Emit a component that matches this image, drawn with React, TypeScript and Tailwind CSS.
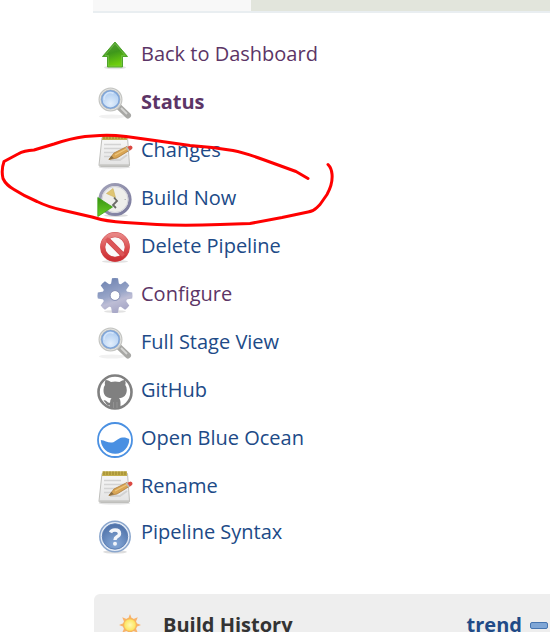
import type { ReactNode } from "react";

function Icon({ children }: { children: ReactNode }) {
  return (
    <svg viewBox="0 0 36 36" className="size-9 shrink-0" aria-hidden="true">
      {children}
    </svg>
  );
}

function ArrowIcon() {
  return (
    <Icon>
      <defs>
        <linearGradient id="arrow" x1="0" y1="0" x2="0.3" y2="1">
          <stop offset="0" stopColor="#5b9e3c" />
          <stop offset="0.5" stopColor="#3f981b" />
          <stop offset="1" stopColor="#6fd00c" />
        </linearGradient>
      </defs>
      <ellipse cx="18" cy="29.500" rx="11" ry="1.800" fill="#e2e2e2" />
      <path d="M18 4 30.500 18.500H25.500V29H10.500V18.500H5.500Z" fill="url(#arrow)" stroke="#4fa42c" strokeLinejoin="round" />
      <path d="M18 5.500 28 17.500H24.500V28H11.500V17.500H8Z" fill="none" stroke="#7cc552" strokeWidth="0.6" />
    </Icon>
  );
}

function SearchIcon() {
  return (
    <Icon>
      <defs>
        <radialGradient id="lens" cx="0.5" cy="0.7" r="0.7">
          <stop offset="0" stopColor="#e3effc" />
          <stop offset="1" stopColor="#a3c5ee" />
        </radialGradient>
      </defs>
      <ellipse cx="15" cy="30.500" rx="13" ry="2" fill="#f1f1f1" />
      <path d="M21 20 31 29.500" stroke="#a8a8a5" strokeWidth="6" strokeLinecap="round" />
      <path d="M24 22 30 28" stroke="#d6d6d4" strokeWidth="1.800" />
      <circle cx="13.500" cy="13.500" r="10.500" fill="url(#lens)" stroke="#c4c5c2" strokeWidth="3" />
      <circle cx="13.500" cy="13.500" r="10.500" fill="none" stroke="#e5e5e2" />
      <circle cx="13.500" cy="13.500" r="8.700" fill="none" stroke="#7fa5d8" strokeWidth="1.500" />
      <path d="M7.500 14a6 6 0 0 1 9-6.500" fill="none" stroke="#d4e5fa" strokeWidth="1.500" />
    </Icon>
  );
}

function NotepadIcon() {
  return (
    <Icon>
      <defs>
        <linearGradient id="sheet" x1="0" y1="0" x2="0" y2="1">
          <stop offset="0" stopColor="#f8f8f8" />
          <stop offset="1" stopColor="#e3e3e3" />
        </linearGradient>
      </defs>
      <ellipse cx="17.500" cy="33.300" rx="16" ry="1.300" fill="#e2e2e2" />
      <path d="M5 3.500H30.500L32.500 31Q32.500 32.500 31 32.500H3.500Q2 32.500 2 31Z" fill="url(#sheet)" stroke="#bfbfbc" />
      <path d="M2.500 30.300H32V32H2.500Z" fill="#c6c6c3" />
      <path d="M5.500 1.200H30V6H5Z" fill="#c2ae4d" />
      <path d="M7 1.500V5M10 1.500V5M13 1.500V5M16 1.500V5M19 1.500V5M22 1.500V5M25 1.500V5M28 1.500V5" stroke="#a38d31" strokeWidth="1.300" />
      <path d="M7 10.500H24M7 14.500H27M7 18.500H20M7 22.500H14" stroke="#d3d3d3" strokeWidth="1.300" />
      <path d="M13 26H23L30 21" fill="none" stroke="#d2d2d2" strokeWidth="2" />
      <path d="m12 25.500 5-6.500L30 12.500l3 3.500-13 8Z" fill="#d9a554" stroke="#ad7d3d" strokeWidth="0.8" />
      <path d="m18 21 13-7" stroke="#edc67d" strokeWidth="1.300" />
      <path d="m11.500 25.800 3-4 2.500 2.500Z" fill="#8c7045" />
      <path d="m28.500 13.500 3 4 1.500-.8-3-4Z" fill="#bbb" />
      <path d="m30.500 12.800 3-1.300q3 1 1.500 3.500l-2 1.500Z" fill="#db4a43" />
    </Icon>
  );
}

function ClockIcon() {
  return (
    <Icon>
      <defs>
        <linearGradient id="rim" x1="0" y1="0" x2="1" y2="1">
          <stop offset="0" stopColor="#a2a2b9" />
          <stop offset="1" stopColor="#7a7a9d" />
        </linearGradient>
        <linearGradient id="play" x1="0" y1="0" x2="0" y2="1">
          <stop offset="0" stopColor="#389311" />
          <stop offset="1" stopColor="#69d025" />
        </linearGradient>
      </defs>
      <ellipse cx="19" cy="33.500" rx="12" ry="1.500" fill="#ddd" />
      <circle cx="18" cy="17.500" r="15" fill="#eeeeeb" stroke="url(#rim)" strokeWidth="3.200" />
      <circle cx="18" cy="17.500" r="13" fill="none" stroke="#d2d2da" />
      <path d="M9.500 11.500 16 6.500l2.500 9Z" fill="#dfc573" stroke="#cbb25e" strokeWidth="0.6" />
      <path d="m17 15.500 3 3.500-4 4 3 3" fill="none" stroke="#6a6a66" strokeWidth="1.800" />
      <path d="M29 17.500h-1.500" stroke="#bbb" />
      <path d="M.8 15.500 15.500 25 .8 34.500Z" fill="url(#play)" stroke="#3c9f17" strokeWidth="0.8" />
    </Icon>
  );
}

function DeleteIcon() {
  return (
    <Icon>
      <defs>
        <linearGradient id="ban" x1="0" y1="0" x2="0" y2="1">
          <stop offset="0" stopColor="#e88584" />
          <stop offset="0.6" stopColor="#d9494b" />
          <stop offset="1" stopColor="#cc3035" />
        </linearGradient>
      </defs>
      <ellipse cx="18" cy="31.500" rx="13" ry="1.500" fill="#e2e2e2" />
      <circle cx="18" cy="17" r="12.300" fill="#fafafa" stroke="#d05053" strokeWidth="5.200" />
      <path d="m9.500 8.500 17 17" stroke="#cf4a4d" strokeWidth="5.200" />
      <circle cx="18" cy="17" r="12.300" fill="none" stroke="url(#ban)" strokeWidth="4.200" />
      <path d="m9.500 8.500 17 17" stroke="#dc5658" strokeWidth="3.800" />
    </Icon>
  );
}

const turns = [0, 45, 90, 135, 180, 225, 270, 315];

function GearIcon() {
  return (
    <Icon>
      <defs>
        <linearGradient id="gear" gradientUnits="userSpaceOnUse" x1="12" y1="1" x2="24" y2="35">
          <stop offset="0" stopColor="#7286b3" />
          <stop offset="0.45" stopColor="#98a5c8" />
          <stop offset="0.65" stopColor="#bdbdd5" />
          <stop offset="1" stopColor="#a3a3c4" />
        </linearGradient>
        <mask id="gearShape">
          <circle cx="18" cy="17.500" r="12.500" fill="white" />
          {turns.map((angle) => (
            <path key={angle} d="M13.800 7.500 15 .3q3-.6 6 0L22.200 7.500Z" fill="white" transform={`rotate(${angle} 18 17.500)`} />
          ))}
          <circle cx="18" cy="17.500" r="4.500" fill="black" />
        </mask>
      </defs>
      <ellipse cx="18" cy="33.500" rx="11" ry="1.300" fill="#e2e2e2" />
      <rect width="36" height="36" fill="url(#gear)" mask="url(#gearShape)" />
      <circle cx="18" cy="17.500" r="5" fill="none" stroke="#8c94b8" />
    </Icon>
  );
}

function OctocatIcon() {
  return (
    <Icon>
      <circle cx="18" cy="18" r="16.500" fill="white" stroke="#808080" strokeWidth="2.600" />
      <path
        d="M8.500 6Q11 5.800 14 8Q18 7 22.500 8Q25.500 5.800 28 6Q29 8.500 28.300 11Q30 13 29.800 16C29.500 21.500 27 23.500 22 24.300Q23.500 25.500 23.500 28V34Q18 36 13 34V31.500C9 31.800 9.500 28.800 6.800 27Q6 26 8 26.200C10.500 27 10.500 29.500 13 28.700Q13 25.500 14.500 24.300C9 23.500 6.500 21.500 6.500 16Q6.300 13 8 11Q7.500 8.500 8.500 6Z"
        fill="#808080"
      />
      <path d="M16.500 28V34M20 28V34" stroke="#929292" />
    </Icon>
  );
}

function OceanIcon() {
  return (
    <Icon>
      <circle cx="18" cy="18" r="17" fill="white" stroke="#4a90e2" strokeWidth="1.800" />
      <path d="M3.800 18C8 18.500 11 21 15 20.500C19 20 20.500 16 25.500 15.500C28 15.200 30 16 32.200 17A14.200 14.200 0 0 1 3.800 18Z" fill="#4a90e2" />
    </Icon>
  );
}

function HelpIcon() {
  return (
    <Icon>
      <defs>
        <radialGradient id="help" cx="0.5" cy="0.8" r="0.8">
          <stop offset="0" stopColor="#86a9d8" />
          <stop offset="1" stopColor="#4d70a7" />
        </radialGradient>
      </defs>
      <ellipse cx="18" cy="34" rx="12" ry="1.600" fill="#ddd" />
      <circle cx="18" cy="18.500" r="15.200" fill="#e6edf7" stroke="#8aa6cd" strokeWidth="1.500" />
      <circle cx="18" cy="18.500" r="12.700" fill="url(#help)" stroke="#5f82b7" />
      <path d="M13.500 14.500Q14.500 12 18 12Q22.500 12 22.500 15.500Q22.500 17.500 20 18.700Q18 19.800 18 22" fill="none" stroke="#f2f5fa" strokeWidth="3.400" />
      <circle cx="18" cy="25.800" r="2" fill="#f2f5fa" />
    </Icon>
  );
}

function SunIcon() {
  return (
    <svg viewBox="0 0 24 24" className="size-6 shrink-0" aria-hidden="true">
      <defs>
        <radialGradient id="sun">
          <stop offset="0" stopColor="#fffab2" />
          <stop offset="1" stopColor="#fce154" />
        </radialGradient>
      </defs>
      {turns.map((angle) => (
        <path key={angle} d="M10 6 12 1l2 5Z" fill="#f8b26b" transform={`rotate(${angle} 12 12)`} />
      ))}
      <circle cx="12" cy="12" r="6.500" fill="url(#sun)" stroke="#f7b45f" strokeWidth="1.300" />
    </svg>
  );
}

type Task = { label: string; icon: ReactNode; style: string };

const unseen = "leading-8 text-[#204a87]";
const visited = "leading-8 text-[#5c3566]";

const tasks: Task[] = [
  { label: "Back to Dashboard", icon: <ArrowIcon />, style: visited },
  { label: "Status", icon: <SearchIcon />, style: "leading-8 font-bold text-[#5c3566]" },
  { label: "Changes", icon: <NotepadIcon />, style: unseen },
  { label: "Build Now", icon: <ClockIcon />, style: unseen },
  { label: "Delete Pipeline", icon: <DeleteIcon />, style: unseen },
  { label: "Configure", icon: <GearIcon />, style: visited },
  { label: "Full Stage View", icon: <SearchIcon />, style: unseen },
  { label: "GitHub", icon: <OctocatIcon />, style: unseen },
  { label: "Open Blue Ocean", icon: <OceanIcon />, style: unseen },
  { label: "Rename", icon: <NotepadIcon />, style: unseen },
  { label: "Pipeline Syntax", icon: <HelpIcon />, style: "leading-7 text-[#204a87]" },
];

export default function App() {
  return (
    <div className="relative h-screen overflow-hidden bg-white pl-[93px] font-['Open_Sans','Noto_Sans',sans-serif] text-xl">
      <header className="flex h-[13px] border-b-2 border-[#e9eef1]">
        <div className="w-[158px] bg-[#f8f8f8]" />
        <div className="flex-1 bg-[#e2e5dc]" />
      </header>

      <nav aria-label="Tasks" className="pt-[25px] pl-1">
        <ul className="flex flex-col gap-3">
          {tasks.map((task) => (
            <li key={task.label}>
              <a href="#" className="flex items-start gap-2">
                {task.icon}
                <span className={task.style}>{task.label}</span>
              </a>
            </li>
          ))}
        </ul>
      </nav>

      <section className="mt-10 ml-px flex items-center rounded-tl-md bg-[#eeeeee] py-[17px] pl-6 font-bold">
        <SunIcon />
        <h2 className="ml-[21px] flex-1 leading-7 text-[#333333]">Build History</h2>
        <a href="#" className="leading-7 text-[#204a87]">
          trend
        </a>
        <button
          type="button"
          aria-label="Collapse build history"
          className="mr-0.5 ml-2 h-[7px] w-[18px] rounded-xs border border-[#4775b0] bg-[#7fa6d6]"
        />
      </section>

      <svg
        viewBox="0 0 350 120"
        className="pointer-events-none absolute top-[120px] left-0 h-[120px] w-[350px]"
        fill="none"
        stroke="#ff0000"
        strokeWidth="3"
        strokeLinecap="round"
        strokeLinejoin="round"
        aria-hidden="true"
      >
        <path d="M308 58.500 296 51.500 263 39.500Q244 32.500 233 30.500L212 27.500 190 25.500 155 20.500 126 16.500Q111 14.800 100 15.500L85 16.500Q70 18.500 54 24L34 30Q24 30.500 18 34L4 41.500Q1 50 3 58.500Q6 65 14 69.500Q24 76 37 81.500Q48 87 64 90.500L92 97Q106 101.500 125 102.500L157 104.500Q183 105.800 220 104.500L250 103.500 282 97.500 308 92Q313 91.500 317 87.500L320 84.500 327 74.500Q333 64 332 54Q331.500 48 328 44.500" />
      </svg>
    </div>
  );
}
